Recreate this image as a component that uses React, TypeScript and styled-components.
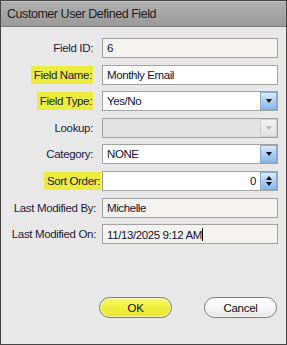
import React, {FC} from "react";
import styled, {createGlobalStyle} from 'styled-components';

const GlobalStyle = createGlobalStyle`
  html, body {
    margin: 0;
    padding: 0;
    background: #e8e8e8;
  }
  body {
    font-family: "Liberation Sans", Arial, sans-serif;
  }
`;

const Window = styled.div`
  width: 287px;
  height: 345px;
  box-sizing: border-box;
  border: 1px solid #444;
  background: #e8e8e8;
  display: flex;
  flex-direction: column;
`;

const TitleBar = styled.div`
  height: 24px;
  flex-shrink: 0;
  background: linear-gradient(#b0b0b0, #9a9a9a);
  border-top: 1px solid #c4c4c4;
  border-bottom: 1px solid #7c7c7c;
  display: flex;
  align-items: center;
  padding-left: 6px;
  font-size: 12.5px;
  letter-spacing: -0.45px;
  color: #1e1e1e;
`;

const Form = styled.div`
  display: grid;
  grid-template-columns: 84px 176px;
  column-gap: 9px;
  row-gap: 6.6px;
  padding: 11px 0 0 8px;
  align-items: center;
`;

const Label = styled.div<{shift?: number}>`
  justify-self: end;
  margin-right: ${p => -(p.shift || 0)}px;
  font-size: 11.5px;
  letter-spacing: -0.35px;
  color: #202040;
  white-space: nowrap;
`;

const Marked = styled.span`
  display: inline-block;
  background: #ecec3c;
  padding: 3px 1px 3px 3px;
  margin-left: -3px;
`;

const Box = styled.div<{tone?: 'white' | 'read' | 'off'}>`
  height: 20px;
  box-sizing: border-box;
  border: 1px solid #a2a2a2;
  background: ${p => p.tone === 'white' ? '#fff' : p.tone === 'off' ? '#e4e4e4' : '#f4f3ef'};
  display: flex;
  align-items: center;
  font-size: 11.5px;
  letter-spacing: -0.4px;
  color: #101038;
`;

const Value = styled.span<{right?: boolean}>`
  flex: 1;
  padding: 0 4px;
  text-align: ${p => p.right ? 'right' : 'left'};
  white-space: nowrap;
`;

const Caret = styled.span`
  display: inline-block;
  width: 1px;
  height: 13px;
  background: #000;
  vertical-align: -2px;
`;

const DropButton = styled.div<{disabled?: boolean}>`
  width: 17px;
  height: 18px;
  box-sizing: border-box;
  border: 1px solid ${p => p.disabled ? '#cfcfcf' : '#8aaad2'};
  background: ${p => p.disabled
    ? 'linear-gradient(#f2f2f2, #e2e2e2)'
    : 'linear-gradient(#dcebfb, #a9cbf0 55%, #8ab8ec)'};
  display: flex;
  flex-direction: column;
  align-items: center;
  justify-content: center;
  gap: 2px;
`;

const Arrow = styled.div<{up?: boolean; disabled?: boolean}>`
  width: 0;
  height: 0;
  border-left: 3.5px solid transparent;
  border-right: 3.5px solid transparent;
  ${p => p.up
    ? `border-bottom: 4px solid ${p.disabled ? '#b8b8b8' : '#101020'};`
    : `border-top: 4px solid ${p.disabled ? '#b8b8b8' : '#101020'};`}
`;

const Footer = styled.div`
  display: flex;
  justify-content: flex-end;
  gap: 32px;
  padding: 53px 9px 0 0;
`;

const Button = styled.div<{primary?: boolean}>`
  width: 73px;
  height: 21px;
  box-sizing: border-box;
  border: 1px solid #7a7a7a;
  border-radius: 11px;
  background: ${p => p.primary
    ? 'linear-gradient(#f8f868, #eeee3a 55%, #e6e634)'
    : 'linear-gradient(#ffffff, #f4f4f4 55%, #e6e6e6)'};
  box-shadow: inset 0 0 0 1px rgba(255, 255, 255, 0.6);
  display: flex;
  align-items: center;
  justify-content: center;
  font-size: 11.5px;
  letter-spacing: -0.3px;
  color: #101010;
`;

const Combo: FC<{value?: string; disabled?: boolean}> = ({value, disabled}) => (
  <Box tone={disabled ? 'off' : 'white'}>
    <Value>{value}</Value>
    <DropButton disabled={disabled}>
      <Arrow disabled={disabled} />
    </DropButton>
  </Box>
);

const App: FC = () => {
  return (
    <>
      <GlobalStyle />
      <Window>
        <TitleBar>Customer User Defined Field</TitleBar>
        <Form>
          <Label>Field ID:</Label>
          <Box><Value>6</Value></Box>

          <Label><Marked>Field Name:</Marked></Label>
          <Box tone="white"><Value>Monthly Email</Value></Box>

          <Label><Marked>Field Type:</Marked></Label>
          <Combo value="Yes/No" />

          <Label>Lookup:</Label>
          <Combo disabled />

          <Label>Category:</Label>
          <Combo value="NONE" />

          <Label shift={8}><Marked>Sort Order:</Marked></Label>
          <Box tone="white">
            <Value right>0</Value>
            <DropButton>
              <Arrow up />
              <Arrow />
            </DropButton>
          </Box>

          <Label shift={3}>Last Modified By:</Label>
          <Box><Value>Michelle</Value></Box>

          <Label shift={3}>Last Modified On:</Label>
          <Box><Value>11/13/2025 9:12 AM<Caret /></Value></Box>
        </Form>
        <Footer>
          <Button primary>OK</Button>
          <Button>Cancel</Button>
        </Footer>
      </Window>
    </>
  );
}

export default App;
